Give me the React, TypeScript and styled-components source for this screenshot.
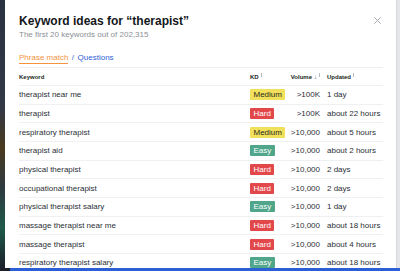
import styled, { createGlobalStyle } from 'styled-components';

const GlobalStyle = createGlobalStyle`
  html, body {
    margin: 0;
    padding: 0;
    background: #1f2633;
    overflow: hidden;
  }
  * { box-sizing: border-box; }
`;

const Page = styled.div`
  width: 400px;
  height: 271px;
  display: flex;
  flex-direction: column;
  font-family: "Liberation Sans", Arial, sans-serif;
`;

const Stage = styled.div`
  flex: 1;
  display: flex;
  min-height: 0;
`;

const DarkEdge = styled.div`
  width: 5px;
  background: linear-gradient(180deg, #2a3140 0%, #323846 40%, #4a3a20 55%, #2e3a40 70%, #1f5a4a 85%, #1a1f2a 100%);
`;

const GreyEdge = styled.div`
  width: 4px;
  background: #e4e6e9;
  border-left: 1px solid #d6d8dc;
`;

const BottomStrip = styled.div`
  height: 3px;
  display: flex;
`;

const BottomDark = styled.div`
  width: 10px;
  background: #1a1f2a;
`;

const BottomBlue = styled.div`
  flex: 1;
  background: #2c5fd6;
`;

const Modal = styled.div`
  flex: 1;
  background: #fff;
  padding: 14px 13px 0 14px;
  position: relative;
  overflow: hidden;
`;

const Close = styled.button`
  position: absolute;
  top: 17px;
  right: 15px;
  width: 7px;
  height: 7px;
  padding: 0;
  border: none;
  background: none;
  display: flex;
`;

const Title = styled.h1`
  margin: 0;
  font-size: 12px;
  line-height: 15px;
  font-weight: 700;
  color: #14171c;
`;

const Subtitle = styled.div`
  margin-top: 1px;
  font-size: 8px;
  line-height: 10px;
  color: #8b8f96;
`;

const Tabs = styled.div`
  margin-top: 13px;
  display: flex;
  align-items: flex-start;
  gap: 3.5px;
  font-size: 8px;
  line-height: 10px;
  border-bottom: 1px solid #eceef1;
  padding-bottom: 3px;
`;

const Tab = styled.span<{ $active?: boolean }>`
  color: ${p => (p.$active ? '#f5923e' : '#2f5fd8')};
  border-bottom: 1px solid ${p => (p.$active ? '#f5923e' : 'transparent')};
`;

const Slash = styled.span`
  color: #2f5fd8;
`;

const Table = styled.div`
  display: flex;
  flex-direction: column;
`;

const Row = styled.div<{ $head?: boolean }>`
  display: grid;
  grid-template-columns: 231px 38px 32px 1fr;
  align-items: center;
  height: ${p => (p.$head ? '18px' : '18.67px')};
  border-bottom: 1px solid #eef0f2;
  font-size: ${p => (p.$head ? '6px' : '8px')};
  font-weight: ${p => (p.$head ? 700 : 400)};
  color: ${p => (p.$head ? '#1c1f24' : '#2b2f36')};
`;

const Cell = styled.div<{ $right?: boolean }>`
  white-space: nowrap;
  text-align: ${p => (p.$right ? 'right' : 'left')};
`;

const HeadCell = styled.div<{ $right?: boolean }>`
  display: flex;
  align-items: center;
  justify-content: ${p => (p.$right ? 'flex-end' : 'flex-start')};
  white-space: nowrap;
`;

const SortTick = styled.span`
  display: inline-block;
  width: 1px;
  height: 4px;
  background: #b8bcc2;
  margin-left: 2px;
  margin-top: -3px;
`;

const Arrow = styled.span`
  font-size: 6px;
  color: #4a4f57;
  margin-left: 2px;
  margin-top: 1px;
`;

const Updated = styled.div`
  padding-left: 7px;
  white-space: nowrap;
`;

const UpdatedHead = styled(HeadCell)`
  padding-left: 7px;
`;

type Kd = 'Easy' | 'Medium' | 'Hard';

const Badge = styled.span<{ $kind: Kd }>`
  display: inline-block;
  font-size: 8px;
  line-height: 11px;
  padding: 0 3.5px;
  border-radius: 1px;
  background: ${p =>
    p.$kind === 'Medium' ? '#f0e05c' : p.$kind === 'Hard' ? '#e2474a' : '#4fa68b'};
  color: ${p => (p.$kind === 'Medium' ? '#2a2a1a' : '#ffffff')};
`;

const rows: { keyword: string; kd: Kd; volume: string; updated: string }[] = [
  { keyword: 'therapist near me', kd: 'Medium', volume: '>100K', updated: '1 day' },
  { keyword: 'therapist', kd: 'Hard', volume: '>100K', updated: 'about 22 hours' },
  { keyword: 'respiratory therapist', kd: 'Medium', volume: '>10,000', updated: 'about 5 hours' },
  { keyword: 'therapist aid', kd: 'Easy', volume: '>10,000', updated: 'about 2 hours' },
  { keyword: 'physical therapist', kd: 'Hard', volume: '>10,000', updated: '2 days' },
  { keyword: 'occupational therapist', kd: 'Hard', volume: '>10,000', updated: '2 days' },
  { keyword: 'physical therapist salary', kd: 'Easy', volume: '>10,000', updated: '1 day' },
  { keyword: 'massage therapist near me', kd: 'Hard', volume: '>10,000', updated: 'about 18 hours' },
  { keyword: 'massage therapist', kd: 'Hard', volume: '>10,000', updated: 'about 4 hours' },
  { keyword: 'respiratory therapist salary', kd: 'Easy', volume: '>10,000', updated: 'about 18 hours' },
];

export default function App() {
  return (
    <Page>
      <GlobalStyle />
      <Stage>
        <DarkEdge />
        <Modal>
          <Close aria-label="Close">
            <svg width="7" height="7" viewBox="0 0 7 7">
              <path d="M0.3 0.3 L6.7 6.7 M6.7 0.3 L0.3 6.7" stroke="#a0a5ac" strokeWidth="0.9" />
            </svg>
          </Close>
          <Title>Keyword ideas for “therapist”</Title>
          <Subtitle>The first 20 keywords out of 202,315</Subtitle>
          <Tabs>
            <Tab $active>Phrase match</Tab>
            <Slash>/</Slash>
            <Tab>Questions</Tab>
          </Tabs>
          <Table>
            <Row $head>
              <HeadCell>Keyword</HeadCell>
              <HeadCell>KD<SortTick /></HeadCell>
              <HeadCell $right>Volume<Arrow>↓</Arrow><SortTick /></HeadCell>
              <UpdatedHead>Updated<SortTick /></UpdatedHead>
            </Row>
            {rows.map(r => (
              <Row key={r.keyword}>
                <Cell>{r.keyword}</Cell>
                <Cell><Badge $kind={r.kd}>{r.kd}</Badge></Cell>
                <Cell $right>{r.volume}</Cell>
                <Updated>{r.updated}</Updated>
              </Row>
            ))}
          </Table>
        </Modal>
        <GreyEdge />
      </Stage>
      <BottomStrip>
        <BottomDark />
        <BottomBlue />
      </BottomStrip>
    </Page>
  );
}
